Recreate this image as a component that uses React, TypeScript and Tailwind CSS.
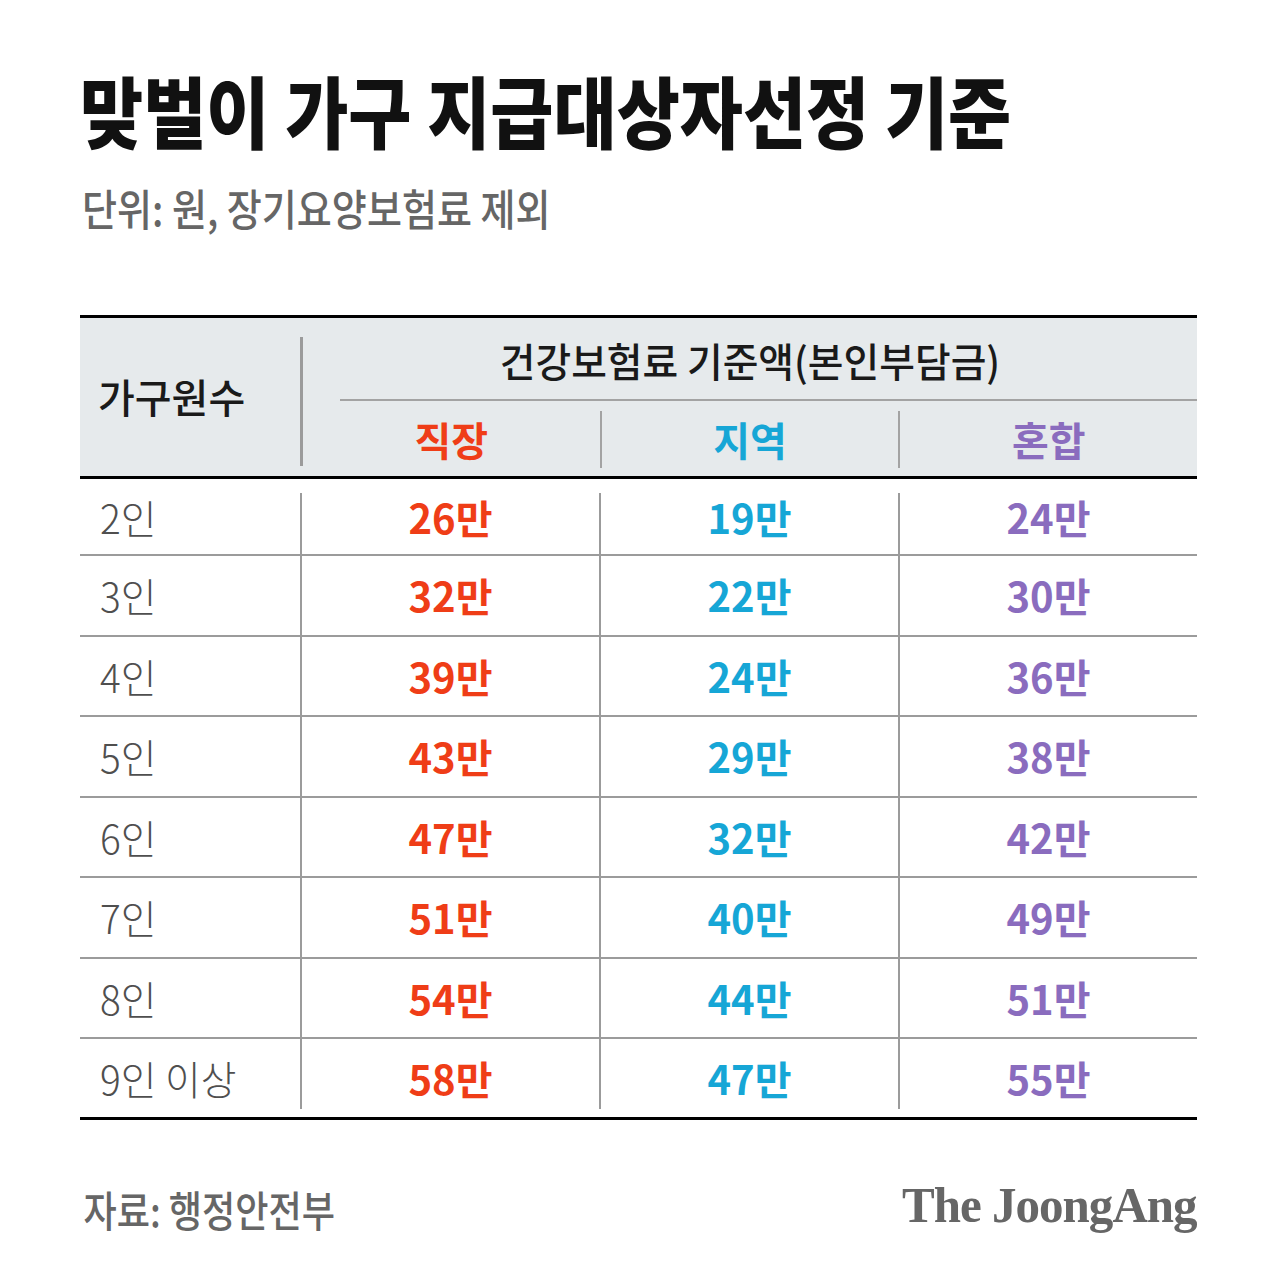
const rows = [
  ["2인", "26만", "19만", "24만"],
  ["3인", "32만", "22만", "30만"],
  ["4인", "39만", "24만", "36만"],
  ["5인", "43만", "29만", "38만"],
  ["6인", "47만", "32만", "42만"],
  ["7인", "51만", "40만", "49만"],
  ["8인", "54만", "44만", "51만"],
  ["9인 이상", "58만", "47만", "55만"],
];

const valueColors = ["text-[#ef3d17]", "text-[#16a6d6]", "text-[#8a6cbe]"];

function rowHeight(i: number) {
  if (i === 0) return "h-[77px] border-b-2 border-[#9b9b9b]";
  if (i === rows.length - 1) return "h-[81px] border-b-[3px] border-black";
  return "h-[80.5px] border-b-2 border-[#9b9b9b]";
}

function dividerInset(i: number) {
  if (i === 0) return "mt-[14px]";
  if (i === rows.length - 1) return "mb-[8px]";
  return "";
}

export default function App() {
  return (
    <div className="w-[1284px] h-[1284px] bg-white flex flex-col pl-[80px] pr-[87px] font-['Noto_Sans_CJK_KR','Noto_Sans',sans-serif] overflow-hidden">
      <h1 className="mt-[70px] text-[78px] leading-none font-black text-[#111] whitespace-nowrap">
        <span className="inline-block origin-left scale-x-[0.88]">맞벌이 가구 지급대상자선정 기준</span>
      </h1>
      <p className="mt-[38px] pl-[2px] text-[43px] leading-none font-medium text-[#666] whitespace-nowrap">
        <span className="inline-block origin-left scale-x-[0.885]">단위: 원, 장기요양보험료 제외</span>
      </p>

      <div className="mt-[86px] flex flex-col">
        <div className="flex h-[164px] border-y-[3px] border-black bg-[#e6eaec]">
          <div className="w-[220px] flex items-center pl-[18px] pb-[2px]">
            <span className="text-[40px] leading-none font-medium text-[#1a1a1a] whitespace-nowrap">가구원수</span>
          </div>
          <div className="w-[3px] bg-[#9b9b9b] mt-[19px] mb-[10px]" />
          <div className="flex-1 flex flex-col">
            <div className="h-[81px] flex items-center justify-center pt-[2px]">
              <span className="inline-block scale-x-[0.97] text-[40px] leading-none font-medium text-[#1a1a1a] whitespace-nowrap">건강보험료 기준액(본인부담금)</span>
            </div>
            <div className="h-[2px] ml-[37px] bg-[#a3a3a3]" />
            <div className="flex-1 flex">
              <div className="flex-1 flex items-center justify-center">
                <span className="text-[40px] leading-none font-bold text-[#ef3d17]">직장</span>
              </div>
              <div className="w-[2px] bg-[#a3a3a3] mt-[10px] mb-[8px]" />
              <div className="flex-1 flex items-center justify-center">
                <span className="text-[40px] leading-none font-bold text-[#16a6d6]">지역</span>
              </div>
              <div className="w-[2px] bg-[#a3a3a3] mt-[10px] mb-[8px]" />
              <div className="flex-1 flex items-center justify-center">
                <span className="text-[40px] leading-none font-bold text-[#8a6cbe]">혼합</span>
              </div>
            </div>
          </div>
        </div>

        {rows.map((row, i) => (
          <div key={row[0]} className={`flex ${rowHeight(i)}`}>
            <div className="w-[220px] flex items-center pl-[20px]">
              <span className="inline-block origin-left scale-x-[0.97] text-[40px] leading-none font-light text-[#4f4f4f] whitespace-nowrap">{row[0]}</span>
            </div>
            {row.slice(1).map((v, j) => (
              <div key={j} className="flex-1 flex">
                <div className={`w-[2px] bg-[#9b9b9b] ${dividerInset(i)}`} />
                <div className="flex-1 flex items-center justify-center">
                  <span className={`text-[40px] leading-none font-bold ${valueColors[j]}`}>{v}</span>
                </div>
              </div>
            ))}
          </div>
        ))}
      </div>

      <div className="mt-[60px] flex items-end justify-between">
        <span className="inline-block origin-left scale-x-[0.86] pl-[4px] text-[42px] leading-none font-medium text-[#666] whitespace-nowrap">자료: 행정안전부</span>
        <span className="inline-block origin-right scale-x-[0.98] font-['Liberation_Serif',serif] text-[50px] leading-none font-bold tracking-[-0.02em] text-[#666] whitespace-nowrap">The JoongAng</span>
      </div>
    </div>
  );
}
